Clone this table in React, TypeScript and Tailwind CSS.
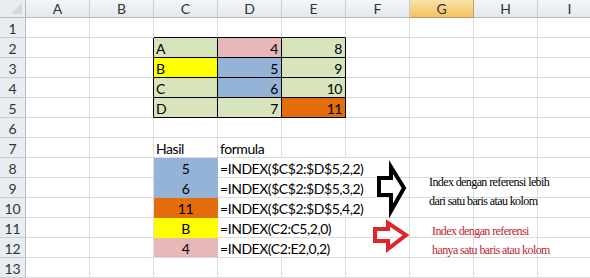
import React from "react";

type Cell = {
  text?: string;
  bg?: string;
  align?: "left" | "center" | "right";
  overflow?: boolean;
};

const COLS = ["A", "B", "C", "D", "E", "F", "G", "H", "I"];
const ROWS = Array.from({ length: 13 }, (_, i) => i + 1);

const GREEN = "bg-[#d7e4bc]";
const PINK = "bg-[#e6b9b8]";
const BLUE = "bg-[#95b3d7]";
const YELLOW = "bg-[#ffff00]";
const ORANGE = "bg-[#e46c0a]";

const data: Record<string, Cell> = {
  C2: { text: "A", bg: GREEN },
  D2: { text: "4", bg: PINK, align: "right" },
  E2: { text: "8", bg: GREEN, align: "right" },
  C3: { text: "B", bg: YELLOW },
  D3: { text: "5", bg: BLUE, align: "right" },
  E3: { text: "9", bg: GREEN, align: "right" },
  C4: { text: "C", bg: GREEN },
  D4: { text: "6", bg: BLUE, align: "right" },
  E4: { text: "10", bg: GREEN, align: "right" },
  C5: { text: "D", bg: GREEN },
  D5: { text: "7", bg: GREEN, align: "right" },
  E5: { text: "11", bg: ORANGE, align: "right" },
  C7: { text: "Hasil" },
  D7: { text: "formula" },
  C8: { text: "5", bg: BLUE, align: "center" },
  D8: { text: "=INDEX($C$2:$D$5,2,2)", overflow: true },
  C9: { text: "6", bg: BLUE, align: "center" },
  D9: { text: "=INDEX($C$2:$D$5,3,2)", overflow: true },
  C10: { text: "11", bg: ORANGE, align: "center" },
  D10: { text: "=INDEX($C$2:$D$5,4,2)", overflow: true },
  C11: { text: "B", bg: YELLOW, align: "center" },
  D11: { text: "=INDEX(C2:C5,2,0)", overflow: true },
  C12: { text: "4", bg: PINK, align: "center" },
  D12: { text: "=INDEX(C2:E2,0,2)", overflow: true },
};

// cells whose right gridline is hidden by overflowing formula text
const noRight = new Set(["D8", "D9", "D10", "D11", "D12", "E8", "E9", "E10"]);

const inTable = (r: number, c: number) => r >= 2 && r <= 5 && c >= 2 && c <= 4;

const SheetCell = ({ r, c }: { r: number; c: number }) => {
  const key = COLS[c] + r;
  const cell = data[key] ?? {};
  const rightBlack = inTable(r, c) || inTable(r, c + 1);
  const bottomBlack = inTable(r, c) || inTable(r + 1, c);
  const right = rightBlack
    ? "border-r-black"
    : noRight.has(key) || cell.bg
      ? "border-r-transparent"
      : "border-r-[#dadcdd]";
  const bottom = bottomBlack
    ? "border-b-black"
    : cell.bg && data[COLS[c] + (r + 1)]?.bg
      ? "border-b-transparent"
      : "border-b-[#dadcdd]";
  const justify =
    cell.align === "right"
      ? "justify-end pr-[3px]"
      : cell.align === "center"
        ? "justify-center"
        : "justify-start pl-[2px]";
  return (
    <div className={`relative flex items-center border-r border-b ${right} ${bottom} ${cell.bg ?? ""} ${justify}`}>
      {cell.text && (
        <span
          className={`whitespace-nowrap pt-[2px] text-[14px] leading-none tracking-[-0.45px] text-black ${
            cell.overflow ? "absolute left-[2px] z-10" : ""
          }`}
        >
          {cell.text}
        </span>
      )}
    </div>
  );
};

export default function App() {
  return (
    <div className="relative h-[278px] w-[590px] overflow-hidden bg-white font-['Lato','Liberation_Sans',sans-serif]">
      <div className="grid grid-cols-[26px_repeat(9,64px)] grid-rows-[18px_repeat(13,20px)]">
        <div className="relative border-r border-b border-[#b8bcc2] bg-[#e9edf2]">
          <svg className="absolute bottom-[3px] right-[3px]" width="11" height="11" viewBox="0 0 11 11">
            <polygon points="11,0 11,11 0,11" fill="#d4d7db" />
          </svg>
        </div>
        {COLS.map((col) => (
          <div
            key={col}
            className={`flex items-center justify-center border-r border-b pt-[1px] text-[14px] leading-none text-[#333] ${
              col === "G"
                ? "border-r-[#c2a263] border-b-[#c2a263] bg-gradient-to-b from-[#fae3a8] to-[#f1c15f]"
                : "border-r-[#c9cdd2] border-b-[#b8bcc2] bg-gradient-to-b from-[#f3f5f8] to-[#e4e8ee]"
            }`}
          >
            {col}
          </div>
        ))}
        {ROWS.map((r) => (
          <React.Fragment key={r}>
            <div className="flex items-center justify-center border-r border-b border-r-[#b8bcc2] border-b-[#c9cdd2] bg-[#e9edf2] pt-[2px] text-[14px] leading-none text-[#333]">
              {r}
            </div>
            {COLS.map((_, c) => (
              <SheetCell key={c} r={r} c={c} />
            ))}
          </React.Fragment>
        ))}
      </div>

      {/* block arrows drawn over the sheet */}
      <svg className="absolute left-0 top-0" width="590" height="278" viewBox="0 0 590 278">
        <polygon
          points="379,178 391,178 391,167 404,188 391,211 391,195 379,195"
          fill="none"
          stroke="#000"
          strokeWidth="4"
          strokeLinejoin="miter"
        />
        <polygon
          points="375,229 388,229 388,223 406,235 388,249 388,241 375,241"
          fill="none"
          stroke="#e0252d"
          strokeWidth="4"
          strokeLinejoin="miter"
        />
      </svg>

      <div className="absolute left-[429px] top-[173px] font-['Liberation_Serif',serif] text-[12px] leading-[19px] tracking-[-0.6px] text-black">
        <p className="whitespace-nowrap">Index dengan referensi lebih</p>
        <p className="whitespace-nowrap">dari satu baris atau kolom</p>
      </div>
      <div className="absolute left-[432px] top-[222px] font-['Liberation_Serif',serif] text-[12px] leading-[19px] tracking-[-0.6px] text-[#c0262e]">
        <p className="whitespace-nowrap">Index dengan referensi</p>
        <p className="whitespace-nowrap">hanya satu baris atau kolom</p>
      </div>
    </div>
  );
}
